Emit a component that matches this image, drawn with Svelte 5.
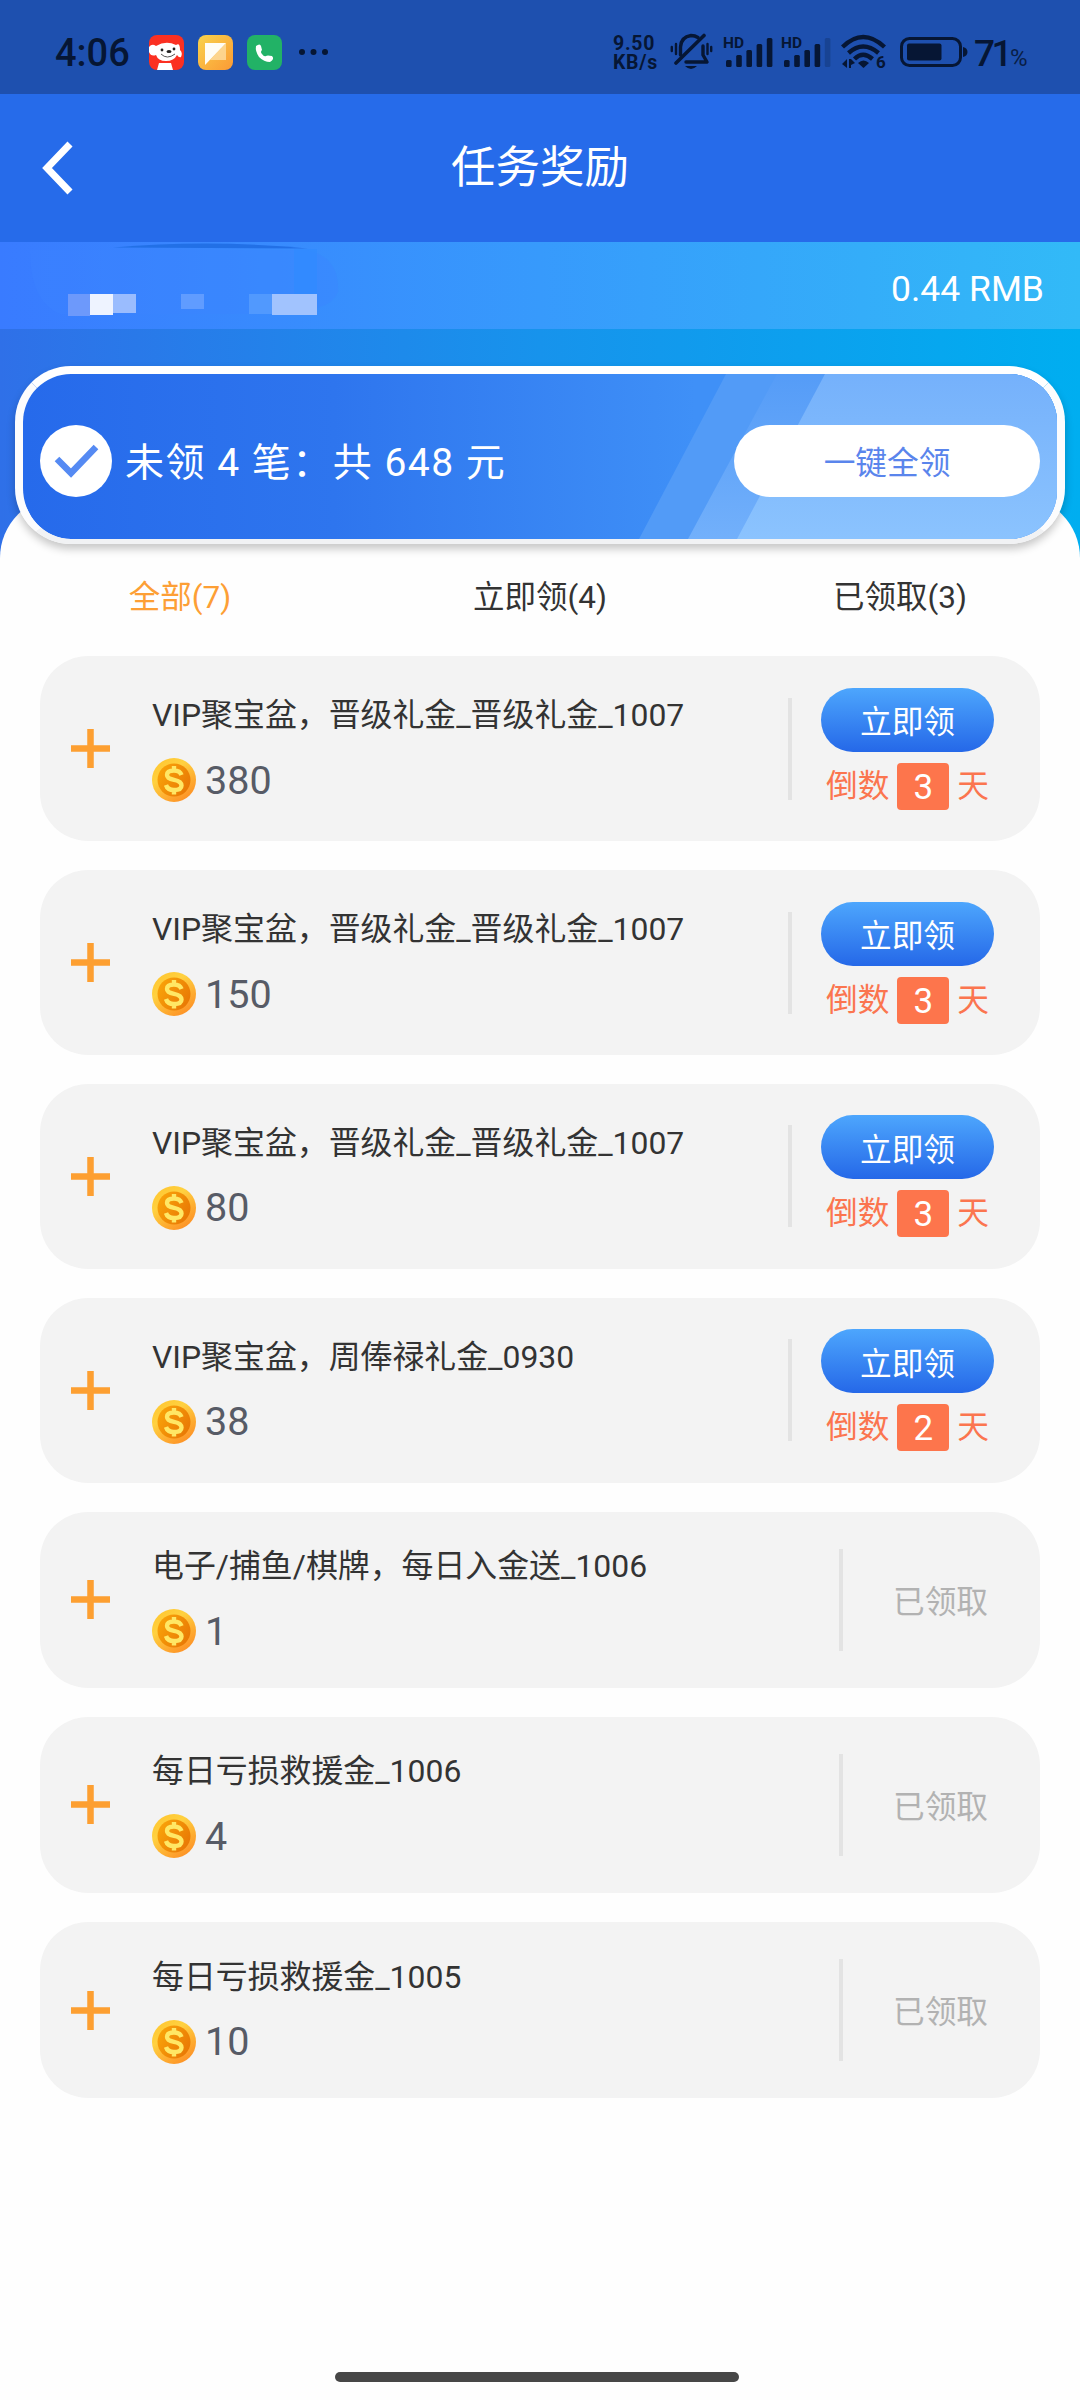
<script>
  let activeTab = $state('all');

  const rewards = [
    { title: 'VIP聚宝盆，晋级礼金_晋级礼金_1007', amount: 380, days: 3 },
    { title: 'VIP聚宝盆，晋级礼金_晋级礼金_1007', amount: 150, days: 3 },
    { title: 'VIP聚宝盆，晋级礼金_晋级礼金_1007', amount: 80, days: 3 },
    { title: 'VIP聚宝盆，周俸禄礼金_0930', amount: 38, days: 2 },
    { title: '电子/捕鱼/棋牌，每日入金送_1006', amount: 1, claimed: true },
    { title: '每日亏损救援金_1006', amount: 4, claimed: true },
    { title: '每日亏损救援金_1005', amount: 10, claimed: true },
  ];

  const pending = rewards.filter((r) => !r.claimed);
  const total = pending.reduce((sum, r) => sum + r.amount, 0);

  const tabs = [
    { id: 'all', label: '全部', count: rewards.length },
    { id: 'pending', label: '立即领', count: pending.length },
    { id: 'claimed', label: '已领取', count: rewards.length - pending.length },
  ];

  let visible = $derived(
    activeTab === 'all' ? rewards : rewards.filter((r) => (activeTab === 'claimed') === !!r.claimed)
  );
</script>

{#snippet signal(level)}
  <svg class="signal" width="50" height="34" viewBox="0 0 50 34">
    <text x="0" y="13" class="hd">HD</text>
    {#each [7, 12, 17, 23, 29] as h, i}
      <rect x={3 + i * 10.2} y={32 - h} width="5.6" height={h} rx="1.5" opacity={i < level ? 1 : 0.22} />
    {/each}
  </svg>
{/snippet}

<div class="screen">
  <div class="status">
    <span class="time">4:06</span>
    <svg class="app" width="35" height="35" viewBox="0 0 35 35">
      <rect width="35" height="35" rx="8" fill="#fb3022" />
      <path d="M0 12Q3 8 7 11Q17 5 27 10Q31 7 31 15Q34 18 32 22Q30 23 28 20Q25 26 17 26Q9 26 7 20Q2 22 0 17Z" fill="#fff" />
      <path d="M10 28H22L24 35H8Z" fill="#fff" />
      <circle cx="13" cy="15" r="1.4" fill="#222" />
      <circle cx="25" cy="14" r="1.4" fill="#222" />
      <ellipse cx="20" cy="16.5" rx="2.5" ry="1.5" fill="#222" />
      <path d="M12 19Q18 25 26 19" fill="none" stroke="#555" stroke-width="1" />
    </svg>
    <svg class="app" width="35" height="35" viewBox="0 0 35 35">
      <defs>
        <linearGradient id="note" x1="0" y1="0" x2="1" y2="1">
          <stop offset="0" stop-color="#f9d34c" />
          <stop offset="1" stop-color="#fb9a35" />
        </linearGradient>
      </defs>
      <rect width="35" height="35" rx="8" fill="url(#note)" />
      <path d="M28 8V25H12Z" fill="#fde0a8" opacity=".75" />
      <path d="M7 8H28L7 30Z" fill="#fffdf5" />
    </svg>
    <svg class="app" width="35" height="35" viewBox="0 0 35 35">
      <rect width="35" height="35" rx="8" fill="#22b266" />
      <path d="M9 11Q13 8 14 11L15 15Q13 17 15 19Q17 22 19 21Q20 20 25 21Q28 24 23 27Q17 27 12 22Q8 16 9 11Z" fill="#fff" />
    </svg>
    <svg class="more" width="32" height="8" viewBox="0 0 32 8">
      <circle cx="4" cy="4" r="3" />
      <circle cx="15.5" cy="4" r="3" />
      <circle cx="27" cy="4" r="3" />
    </svg>

    <div class="system">
      <div class="speed">9.50<br />KB/s</div>
      <svg class="bell" width="43" height="38" viewBox="0 0 43 38">
        <g fill="none" stroke="#061634" stroke-width="3.4" stroke-linecap="round">
          <path d="M10.500 22V14Q11 4 21 2.500Q25 2.500 28 4.500" />
          <path d="M33 13V22L37 29H16" stroke-linejoin="round" />
          <path d="M6 30L34 2.500" stroke-width="3.6" />
          <path d="M1.800 14V18M6 11V21M37.500 11V21M41.200 14V18" stroke-width="2.4" />
        </g>
        <path d="M15 33H27Q21 39 15 33Z" />
      </svg>
      {@render signal(5)}
      {@render signal(4)}
      <svg class="wifi" width="48" height="38" viewBox="0 0 48 38">
        <g fill="none" stroke="#061634" stroke-width="4.4">
          <path d="M1.500 14Q22 -6 43.500 14" />
          <path d="M7.500 20Q22 7 37.500 20" />
          <path d="M13.500 26Q22 17.500 31.500 26" />
        </g>
        <path d="M17 30Q22.500 25 28 30L22.500 35Z" />
        <path d="M6 26V35L1 31ZM8 26H10V35H8ZM10 26L14 30L10 32Z" />
        <text x="35" y="35" class="six">6</text>
      </svg>
      <svg class="battery" width="68" height="30" viewBox="0 0 68 30">
        <rect x="1.5" y="1.5" width="59" height="27" rx="8" fill="none" stroke="#061634" stroke-width="3" />
        <rect x="7" y="6.5" width="34.5" height="17" rx="2" />
        <path d="M63 10Q67.500 11 67.500 15Q67.500 19 63 20Z" />
      </svg>
      <span class="percent">71<small>%</small></span>
    </div>
  </div>

  <header>
    <svg class="back" width="36" height="56" viewBox="0 0 36 56">
      <path d="M31 4L8 28L31 52" fill="none" stroke="#fff" stroke-width="7" />
    </svg>
    <h1>任务奖励</h1>
  </header>

  <main>
    <div class="account">
      <svg class="user" width="360" height="87" viewBox="0 0 360 87">
        <path d="M30 8H305Q340 14 338 50Q330 72 270 72H60Q30 60 30 8Z" fill="#3d85ff" opacity=".35" />
        <rect x="294" y="7" width="23" height="45" fill="#2e8aff" opacity=".6" />
        <path d="M113 5.500Q210 -3 308 6.500Z" fill="#2270e6" />
        <rect x="68" y="52" width="22" height="22" fill="#6d99fb" />
        <rect x="90" y="52" width="23" height="21" fill="#eef3ff" />
        <rect x="113" y="52" width="23" height="19" fill="#9abcfe" />
        <rect x="181" y="52" width="23" height="15" fill="#609cff" />
        <rect x="249" y="52" width="23" height="20" fill="#5199fe" />
        <rect x="272" y="52" width="45" height="21" fill="#a1c3fe" />
      </svg>
      <span class="balance">0.44 RMB</span>
    </div>

    <section class="banner">
      <svg class="stripes" width="1034" height="165" viewBox="0 0 1034 165">
        <defs>
          <linearGradient id="shine" x1="0" y1="0" x2="0" y2="1">
            <stop offset="0" stop-color="#75b1fb" />
            <stop offset="1" stop-color="#8bc3fe" />
          </linearGradient>
          <linearGradient id="shine2" x1="0" y1="0" x2="0" y2="1">
            <stop offset="0" stop-color="#559cf7" />
            <stop offset="1" stop-color="#72b0fb" />
          </linearGradient>
        </defs>
        <path d="M703 0H1034V165H616Z" fill="#529bf7" />
        <path d="M754 0H1034V165H665Z" fill="url(#shine2)" />
        <path d="M802 0H1034V165H714Z" fill="url(#shine)" />
      </svg>
      <svg class="check" width="72" height="72" viewBox="0 0 72 72">
        <circle cx="36" cy="36" r="36" fill="#fff" />
        <path d="M17 34L31 48L56 22" fill="none" stroke="#558af3" stroke-width="6.5" />
      </svg>
      <p>未领 {pending.length} 笔：共 {total} 元</p>
      <button class="claim-all">一键全领</button>
    </section>

    <div class="sheet">
      <nav>
        {#each tabs as tab}
          <button class:active={activeTab === tab.id} onclick={() => (activeTab = tab.id)}>
            {tab.label}({tab.count})
          </button>
        {/each}
      </nav>

      <div class="list">
        {#each visible as reward}
          <article class:claimed={reward.claimed}>
            <svg class="plus" width="39" height="39" viewBox="0 0 39 39">
              <path d="M19.500 0V39M0 19.500H39" stroke="#fd9f31" stroke-width="6.5" />
            </svg>
            <div class="info">
              <h2>{reward.title}</h2>
              <div class="amount">
                <svg width="44" height="44" viewBox="0 0 44 44">
                  <defs>
                    <linearGradient id="rim" x1="0" y1="0" x2=".7" y2="1">
                      <stop offset="0" stop-color="#ffc32c" />
                      <stop offset=".4" stop-color="#ffd140" />
                      <stop offset="1" stop-color="#fd9226" />
                    </linearGradient>
                    <linearGradient id="face" x1="0" y1="0" x2="1" y2=".6">
                      <stop offset="0" stop-color="#fba80a" />
                      <stop offset="1" stop-color="#e97a05" />
                    </linearGradient>
                  </defs>
                  <circle cx="22" cy="22" r="22" fill="url(#rim)" />
                  <circle cx="22" cy="22" r="16.5" fill="url(#face)" />
                  <path
                    d="M22 8V12M22 32V36.500M29.500 17Q28 12.500 22 12.500Q15 12.500 15 17Q15 20.500 22 21.800Q29.500 23.200 29.500 27.500Q29.500 32 22 32Q15.500 32 14 27"
                    fill="none"
                    stroke="#ffe765"
                    stroke-width="4.4"
                  />
                </svg>
                <span>{reward.amount}</span>
              </div>
            </div>
            <div class="action">
              {#if reward.claimed}
                <span class="done">已领取</span>
              {:else}
                <button class="claim">立即领</button>
                <div class="countdown">倒数<b>{reward.days}</b>天</div>
              {/if}
            </div>
          </article>
        {/each}
      </div>
      <div class="home"></div>
    </div>
  </main>
</div>

<style>
  :global(body) {
    margin: 0;
    background: #fefefe;
  }
  .screen {
    display: flex;
    flex-direction: column;
    width: 1080px;
    height: 2400px;
    overflow: hidden;
    font-family: Roboto, 'Noto Sans CJK SC', sans-serif;
    color: #333;
  }
  svg {
    display: block;
    flex: none;
  }
  button {
    padding: 0;
    border: none;
    background: none;
    font: inherit;
    color: inherit;
    cursor: pointer;
  }
  h1,
  h2,
  p {
    margin: 0;
    font-weight: 400;
    white-space: nowrap;
  }

  .status {
    display: flex;
    align-items: center;
    box-sizing: border-box;
    height: 94px;
    padding: 10px 52px 0 55px;
    background: #1e50af;
    color: #061634;
    fill: #061634;
  }
  .time {
    width: 94px;
    padding-top: 2px;
    font-size: 38px;
    font-weight: 500;
  }
  .app {
    margin-right: 14px;
  }
  .more {
    margin-left: 2px;
  }
  .system {
    display: flex;
    align-items: center;
    margin-left: auto;
  }
  .speed {
    width: 57px;
    padding-top: 2px;
    font-size: 19.5px;
    font-weight: 700;
    line-height: 19px;
    letter-spacing: 0.7px;
  }
  .bell {
    margin-right: 10px;
  }
  .signal {
    margin-right: 8px;
  }
  .hd {
    font-size: 15.5px;
    font-weight: 700;
  }
  .six {
    font-size: 17px;
    font-weight: 700;
  }
  .wifi {
    margin: 0 11px 0 2px;
  }
  .percent {
    width: 54px;
    margin-left: 6px;
    padding-top: 2px;
    font-size: 37px;
    font-weight: 500;
    letter-spacing: -3.5px;
    white-space: nowrap;
  }
  .percent small {
    margin-left: 1px;
    font-size: 24px;
    font-weight: 400;
    letter-spacing: 0;
    opacity: 0.85;
  }

  header {
    display: grid;
    grid-template-columns: 1fr auto 1fr;
    align-items: center;
    height: 148px;
    background: #266bea;
    color: #fff;
  }
  .back {
    margin-left: 39px;
  }
  h1 {
    font-size: 44.5px;
    line-height: 60px;
  }

  main {
    display: flex;
    flex: 1;
    flex-direction: column;
    background: linear-gradient(90deg, #2f70e8, #1793ec 50%, #00aef0);
  }
  .account {
    display: flex;
    justify-content: space-between;
    align-items: center;
    height: 87px;
    padding-right: 36px;
    background: linear-gradient(90deg, #397bff, #379afc 50%, #32baf7);
    color: #fff;
  }
  .balance {
    padding-top: 7px;
    font-size: 35.5px;
  }

  .banner {
    position: relative;
    z-index: 1;
    display: flex;
    align-items: center;
    box-sizing: border-box;
    height: 178px;
    margin: 37px 15px 0;
    padding: 9px 17px 0;
    border: 8px solid #fcfcfd;
    border-top-color: #fff;
    border-bottom: 5px solid #f1f2f4;
    border-radius: 56px;
    background: linear-gradient(90deg, #266aeb, #2e75ee 30%, #3f90f7 65%) padding-box;
    box-shadow: 0 5px 9px rgba(0, 0, 0, 0.22);
    color: #fff;
  }
  .stripes {
    position: absolute;
    inset: 0;
    border-radius: 48px;
  }
  .check,
  .banner p,
  .claim-all {
    position: relative;
  }
  .banner p {
    margin-left: 13px;
    padding-bottom: 4px;
    font-size: 39px;
    letter-spacing: 1.5px;
  }
  .claim-all {
    width: 306px;
    height: 72px;
    margin-left: auto;
    padding-bottom: 3px;
    border-radius: 36px;
    background: #fff;
    color: #5a85ec;
    font-size: 31.7px;
  }

  .sheet {
    display: flex;
    flex: 1;
    flex-direction: column;
    margin-top: -48px;
    padding: 48px 0 18px;
    border-radius: 62px 62px 0 0;
    background: #fefefe;
  }
  nav {
    display: grid;
    grid-template-columns: repeat(3, 1fr);
    box-sizing: border-box;
    height: 112px;
    padding-bottom: 13px;
    font-size: 31.5px;
    letter-spacing: -0.3px;
  }
  nav .active {
    color: #fd9f35;
  }

  .list {
    display: flex;
    flex-direction: column;
    gap: 28.6px;
    padding: 0 40px;
  }
  article {
    display: flex;
    align-items: center;
    box-sizing: border-box;
    height: 185.3px;
    padding: 0 46px 0 31px;
    border-radius: 48px;
    background: #f3f3f3;
  }
  article.claimed {
    height: 176.5px;
  }
  .info {
    flex: 1;
    margin-left: 42px;
  }
  h2 {
    margin-top: -3px;
    font-size: 31.9px;
    line-height: 46px;
  }
  .amount {
    display: flex;
    align-items: center;
    gap: 9px;
    margin-top: 20px;
    height: 44px;
    color: #575b66;
    font-size: 39.5px;
  }
  .action {
    position: relative;
    display: flex;
    flex-direction: column;
    align-items: center;
    width: 173px;
    font-size: 31.7px;
  }
  .action::before {
    content: '';
    position: absolute;
    top: 50%;
    left: -33px;
    width: 4px;
    height: 102px;
    margin-top: -51px;
    background: #e3e3e3;
  }
  .claimed .action {
    width: 109px;
    margin-right: -1px;
  }
  .claimed .action::before {
    left: -47px;
  }
  .claim {
    width: 173px;
    height: 64px;
    padding-bottom: 1px;
    border-radius: 32px;
    background: linear-gradient(#4da6fd, #2568e8);
    color: #fff;
  }
  .countdown {
    display: flex;
    align-items: center;
    height: 47px;
    margin-top: 11px;
    line-height: 47px;
    color: #fb754f;
    white-space: nowrap;
  }
  .countdown b {
    width: 52px;
    height: 47px;
    margin: 0 8px;
    border-radius: 4px;
    background: #fd754c;
    color: #fff;
    font-size: 35px;
    font-weight: 400;
    line-height: 50px;
    text-align: center;
  }
  .done {
    padding-bottom: 2px;
    color: #b2b2b2;
  }
  .home {
    width: 404px;
    height: 10px;
    margin: auto auto 0 335px;
    border-radius: 5px;
    background: #474747;
  }
</style>
